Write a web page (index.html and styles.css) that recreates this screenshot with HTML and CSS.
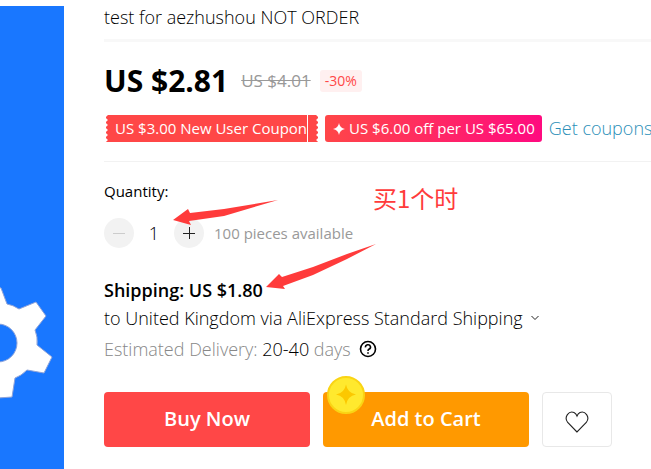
FILE: index.html
```
<!DOCTYPE html>
<html lang="en">
<head>
  <meta charset="UTF-8" />
  <meta name="viewport" content="width=device-width, initial-scale=1.0"/>
  <title>test for aezhushou NOT ORDER</title>
  <link rel="stylesheet" href="styles.css">
</head>
<body>
  <div class="gallery">
    <svg class="gear" width="64" height="120" viewBox="0 0 64 120" aria-hidden="true">
      <path fill="#fff" stroke="#8fa3d8" stroke-width="1" d="M-2 4 L1 5 L7 21 Q13 22 19 26 L36 19 L46 33 L35 47 Q38 54 37 62 L52 74 L44 90 L27 87 Q21 93 15 95 L12 114 L-2 115 Z"/>
      <circle cx="-2" cy="60" r="19" fill="#1977ff" stroke="#8fa3d8"/>
    </svg>
  </div>

  <main class="product">
    <h1 class="title">test for aezhushou NOT ORDER</h1>

    <div class="price-row">
      <span class="price">US $2.81</span>
      <del class="old-price">US $4.01</del>
      <span class="discount">-30%</span>
    </div>

    <div class="coupons">
      <span class="ticket">US $3.00 New User Coupon</span>
      <span class="promo">
        <svg width="12" height="12" viewBox="0 0 12 12" aria-hidden="true"><path fill="#fff" d="M6 0 Q6.8 5.2 12 6 Q6.8 6.8 6 12 Q5.2 6.8 0 6 Q5.2 5.2 6 0Z"/></svg>
        US $6.00 off per US $65.00
      </span>
      <a class="get-coupons" href="#">Get coupons</a>
    </div>

    <label class="quantity-label" for="quantity">Quantity:</label>
    <div class="quantity">
      <button class="step" aria-label="Decrease" disabled>
        <svg width="12" height="12" viewBox="0 0 12 12"><path stroke="#ccc" stroke-width="1" d="M0 6.5H12"/></svg>
      </button>
      <input type="text" id="quantity" class="quantity-input" value="1" />
      <button class="step" aria-label="Increase">
        <svg width="12" height="12" viewBox="0 0 12 12"><path stroke="#222" stroke-width="1" d="M0 6.5H12M6.5 0V12"/></svg>
      </button>
      <span class="stock">100 pieces available</span>
    </div>

    <div class="shipping">
      <div class="shipping-price">Shipping: US $1.80</div>
      <div class="shipping-line">
        to United Kingdom via AliExpress Standard Shipping
        <svg width="8" height="6" viewBox="0 0 8 6" aria-hidden="true"><path fill="none" stroke="#222" d="M0.5 1 L4 4.5 L7.5 1"/></svg>
      </div>
      <div class="shipping-line delivery">
        <span>Estimated Delivery: <span class="days">20-40</span> days</span>
        <svg width="18" height="18" viewBox="0 0 18 18" aria-hidden="true">
          <g fill="none" stroke="#000" stroke-width="1.6">
            <circle cx="9" cy="9" r="7.5"/>
            <path d="M6.5 7.3 A2.5 2.3 0 1 1 9.8 9.2 Q9 9.6 9 11"/>
            <path d="M9 12.2V13.7"/>
          </g>
        </svg>
      </div>
    </div>

    <div class="actions">
      <button class="btn buy">Buy Now</button>
      <button class="btn cart">
        <svg class="coin" width="40" height="40" viewBox="0 0 40 40" aria-hidden="true">
          <circle cx="20" cy="20" r="18" fill="#ffe92e" stroke="#fad414" stroke-width="2"/>
          <path fill="#fcc800" d="M20 9.500 Q21.500 18 30 19.500 Q21.500 21 20 30 Q18.500 21 10 19.500 Q18.500 18 20 9.500Z"/>
        </svg>
        Add to Cart
      </button>
      <button class="wish" aria-label="Add to wish list">
        <svg width="24" height="22" viewBox="0 0 24 22"><path fill="none" stroke="#222" stroke-width="1.1" d="M12 21 L2.700 11.500 C-1.500 6 4 -0.500 9 1.500 Q11 2.500 12 5 Q13 2.500 15 1.500 C20 -0.500 25.500 6 21.300 11.500 Z"/></svg>
      </button>
    </div>
  </main>

  <!-- notes drawn over the page -->
  <svg class="arrows" width="400" height="300" viewBox="0 0 400 300" aria-hidden="true">
    <path fill="#ff3b3b" d="M173 220 L188 209 L190 213 L224 209 L278 200 L224 216 L189 221 L191 225 Z"/>
    <path fill="#ff3b3b" d="M266 287 L279 274 L282 277 L313 267 L347 254 L376 244 L347 259 L313 275 L283 286 L285 289 Z"/>
  </svg>
  <div class="note" lang="zh">买1个时</div>
</body>
</html>
```
FILE: styles.css
```
* {
  box-sizing: border-box;
}

body {
  margin: 0;
  min-height: 100vh;
  display: flex;
  gap: 40px;
  position: relative;
  overflow: hidden;
  background: #fff;
  color: #000;
  font-family: "Open Sans", "Noto Sans CJK SC", sans-serif;
  font-size: 18px;
  font-weight: 300;
}

button,
input {
  font-family: inherit;
}

.gallery {
  flex: 0 0 64px;
  margin-top: 6px;
  padding-top: 277px;
  background: #1977ff;
}

.gear {
  display: block;
}

.product {
  flex: 1;
  min-width: 0;
  padding-top: 5px;
  white-space: nowrap;
}

.title {
  margin: 0;
  padding-bottom: 10px;
  border-bottom: 3px solid #f8f8f8;
  font-size: 18px;
  font-weight: 300;
  line-height: 24px;
}

.price-row {
  display: flex;
  align-items: center;
  gap: 9px;
  padding: 17px 0 12px;
  line-height: 44px;
}

.price {
  margin-right: 4px;
  font-size: 30px;
  font-weight: 700;
}

.old-price {
  color: #999;
  font-size: 17px;
  font-weight: 400;
}

.discount {
  padding: 0 5px;
  border-radius: 3px;
  background: #fff0f0;
  color: #ff4747;
  font-size: 14px;
  font-weight: 400;
  line-height: 22px;
}

.coupons {
  display: flex;
  align-items: center;
  gap: 7px;
  padding: 0 0 19px 2px;
  border-bottom: 1px solid #f2f2f2;
  color: #fff;
  font-size: 15px;
  font-weight: 400;
  line-height: 27px;
}

/* perforated edges and tear line */
.ticket {
  padding: 0 11px 0 9px;
  background:
    radial-gradient(circle at 0 2px, #fff 1px, transparent 2px) 0 3px / 3px 5px repeat-y,
    radial-gradient(circle at 3px 2px, #fff 1px, transparent 2px) 100% 3px / 3px 5px repeat-y,
    linear-gradient(#fff, #fff) right 10px top 0 / 1px 100% no-repeat,
    #ff4747;
}

.promo {
  display: flex;
  align-items: center;
  gap: 4px;
  padding: 0 7px 0 8px;
  border-radius: 3px;
  background: linear-gradient(100deg, #ff4747, #ff0a80);
}

.get-coupons {
  color: #2b8fb8;
  font-size: 18px;
  font-weight: 300;
  text-decoration: none;
}

.quantity-label {
  display: block;
  padding: 18px 0 16px;
  font-size: 15px;
  font-weight: 400;
  line-height: 22px;
}

.quantity {
  display: flex;
  align-items: center;
}

.step {
  display: flex;
  align-items: center;
  justify-content: center;
  width: 30px;
  height: 30px;
  padding: 0;
  border: none;
  border-radius: 50%;
  background: #f2f2f2;
}

.quantity-input {
  width: 40px;
  padding: 0;
  border: none;
  background: none;
  color: #000;
  font-size: 18px;
  font-weight: 300;
  text-align: center;
}

.stock {
  margin-left: 10px;
  color: #999;
  font-size: 15px;
  font-weight: 400;
}

.shipping {
  padding: 28px 0 29px;
  line-height: 28px;
}

.shipping-price {
  font-weight: 600;
}

.shipping-line {
  display: flex;
  align-items: center;
  gap: 8px;
}

.delivery {
  padding-top: 3px;
  color: #888;
}

.days {
  color: #000;
}

.actions {
  display: flex;
  gap: 13px;
}

.btn {
  position: relative;
  width: 206px;
  height: 55px;
  padding: 0 0 2px;
  border: none;
  border-radius: 4px;
  color: #fff;
  font-size: 20px;
  font-weight: 600;
}

.buy {
  background: #ff4747;
}

.cart {
  background: #ff9900;
}

.coin {
  position: absolute;
  top: -17px;
  left: 3px;
}

.wish {
  display: flex;
  align-items: center;
  justify-content: center;
  width: 70px;
  height: 55px;
  padding: 4px 0 0;
  border: 1px solid #e8e8e8;
  border-radius: 4px;
  background: #fff;
}

.arrows {
  position: absolute;
  top: 0;
  left: 0;
  pointer-events: none;
}

.note {
  position: absolute;
  top: 181px;
  left: 373px;
  color: #ff3b3b;
  font-family: "Noto Sans CJK SC", sans-serif;
  font-size: 24px;
  font-weight: 400;
  line-height: 34px;
}
```
